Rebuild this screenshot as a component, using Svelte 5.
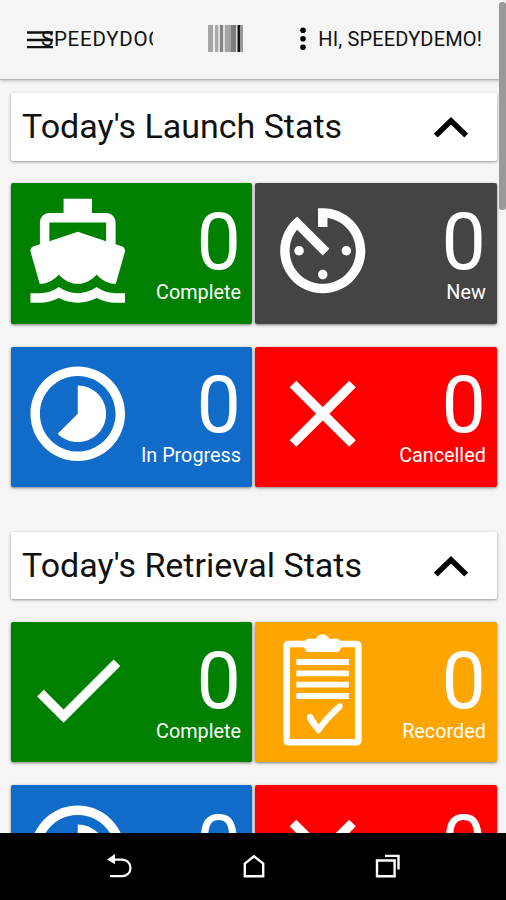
<script>
  const icons = {
    boat: 'M20 21c-1.39 0-2.78-.47-4-1.32-2.44 1.71-5.56 1.71-8 0C6.78 20.53 5.39 21 4 21H2v2h2c1.38 0 2.74-.35 4-.99 2.52 1.29 5.48 1.29 8 0 1.26.65 2.62.99 4 .99h2v-2h-2zM3.95 19H4c1.6 0 3.02-.88 4-2 .98 1.12 2.4 2 4 2s3.02-.88 4-2c.98 1.12 2.4 2 4 2h.05l1.89-6.68c.08-.26.06-.54-.06-.78s-.34-.42-.6-.5L20 10.62V6c0-1.1-.9-2-2-2h-3V1H9v3H6c-1.1 0-2 .9-2 2v4.62l-1.29.42c-.26.08-.48.26-.6.5s-.15.52-.06.78L3.95 19zM6 6h12v3.97L12 8 6 9.97V6z',
    timer: 'M11 17c0 .55.45 1 1 1s1-.45 1-1-.45-1-1-1-1 .45-1 1zm0-14v4h2V5.08c3.39.49 6 3.39 6 6.92 0 3.87-3.13 7-7 7s-7-3.13-7-7c0-1.68.59-3.22 1.58-4.42L12 13l1.41-1.41-6.8-6.8v.02C4.42 6.45 3 9.05 3 12c0 4.97 4.02 9 9 9 4.97 0 9-4.03 9-9s-4.03-9-9-9h-1zm7 9c0-.55-.45-1-1-1s-1 .45-1 1 .45 1 1 1 1-.45 1-1zM6 12c0 .55.45 1 1 1s1-.45 1-1-.45-1-1-1-1 .45-1 1z',
    timelapse: 'M16.24 7.76C15.07 6.59 13.54 6 12 6v6l-4.24 4.24c2.34 2.34 6.14 2.34 8.49 0 2.34-2.34 2.34-6.14-.01-8.48zM12 2C6.48 2 2 6.48 2 12s4.48 10 10 10 10-4.48 10-10S17.52 2 12 2zm0 18c-4.42 0-8-3.58-8-8s3.58-8 8-8 8 3.58 8 8-3.58 8-8 8z',
    close: 'M19 6.41L17.59 5 12 10.59 6.41 5 5 6.41 10.59 12 5 17.59 6.41 19 12 13.41 17.59 19 19 17.59 13.41 12z',
    check: 'M9 16.17L4.83 12l-1.42 1.41L9 19 21 7l-1.41-1.41z'
  };

  const sections = [
    {
      title: "Today's Launch Stats",
      kind: 'launch',
      tiles: [
        { label: 'Complete', count: 0, color: 'green', icon: 'boat' },
        { label: 'New', count: 0, color: 'dark', icon: 'timer' },
        { label: 'In Progress', count: 0, color: 'blue', icon: 'timelapse' },
        { label: 'Cancelled', count: 0, color: 'red', icon: 'close' }
      ]
    },
    {
      title: "Today's Retrieval Stats",
      kind: 'retrieval',
      tiles: [
        { label: 'Complete', count: 0, color: 'green', icon: 'check' },
        { label: 'Recorded', count: 0, color: 'orange', icon: 'clipboard' },
        { label: 'In Progress', count: 0, color: 'blue', icon: 'timelapse' },
        { label: 'Cancelled', count: 0, color: 'red', icon: 'close' }
      ]
    }
  ];

  let open = $state({ launch: true, retrieval: true });
</script>

<div class="screen">
  <header>
    <svg class="menu" viewBox="0 0 26 18">
      <path d="M0 1.5h26M0 9h26M0 16.2h26" stroke="#111" stroke-width="2.3" />
    </svg>
    <span class="brand">SPEEDYDOCK</span>
    <svg class="barcode" viewBox="0 0 35 27">
      <rect width="5" height="27" fill="#a5a5a5" />
      <rect x="5" width="2" height="27" fill="#eee" />
      <rect x="7" width="3" height="27" fill="#aaa" />
      <rect x="10" width="2" height="27" fill="#ddd" />
      <rect x="12" width="3" height="27" fill="#858585" />
      <rect x="15" width="2" height="27" fill="#ddd" />
      <rect x="17" width="6" height="27" fill="#a5a5a5" />
      <rect x="23" width="5" height="27" fill="#7d7d7d" />
      <rect x="28" width="1.5" height="27" fill="#ddd" />
      <rect x="29.5" width="2.5" height="27" fill="#111" />
      <rect x="32" width="3" height="27" fill="#999" />
    </svg>
    <svg class="dots" viewBox="0 0 6 24">
      <circle cx="3" cy="3.2" r="2.8" />
      <circle cx="3" cy="11.7" r="2.8" />
      <circle cx="3" cy="20.2" r="2.8" />
    </svg>
    <span class="user">HI, SPEEDYDEMO!</span>
  </header>

  <main>
    {#each sections as section}
      <section>
        <button class="title" onclick={() => (open[section.kind] = !open[section.kind])}>
          <span>{section.title}</span>
          <svg class:closed={!open[section.kind]} viewBox="0 0 34 21">
            <path d="M1.8 18.6L17 3.8l15.2 14.8" fill="none" stroke="#000" stroke-width="5.4" />
          </svg>
        </button>
        {#if open[section.kind]}
          <div class="tiles">
            {#each section.tiles as tile}
              <div class="tile {tile.color}">
                {#if tile.icon === 'clipboard'}
                  <svg class="icon" viewBox="0 0 113.5 113.5">
                    <rect x="20.7" y="11" width="71.6" height="98.3" rx="1.5" fill="none" stroke="#fff" stroke-width="6.6" />
                    <circle cx="56.6" cy="8.2" r="7" />
                    <path d="M43 5.8h27.4q4 0 4 3.3c3 .6 3 5.8 0 6.4q0 3.6-4 3.6H43q-4 0-4-3.6c-3-.6-3-5.8 0-6.4q0-3.3 4-3.3z" />
                    <path d="M30.3 29h52.6M30.3 40.3h52.6M30.3 51.7h52.6M30.3 63h52.6" stroke="#fff" stroke-width="5.8" />
                    <path d="M41 83c2-3 5-3 6.6 1l5 7.5C59 83 65 76.5 72 71c3-2 6 1 4 4.5C68 83 60 91 54.5 99.3q-2 2.5-4 0C46.5 94 43 90 41 86z" />
                  </svg>
                {:else}
                  <svg class="icon" viewBox="0 0 24 24"><path d={icons[tile.icon]} /></svg>
                {/if}
                <div class="figures">
                  <div class="count">{tile.count}</div>
                  <div class="label">{tile.label}</div>
                </div>
              </div>
            {/each}
          </div>
        {/if}
      </section>
    {/each}
  </main>

  <nav>
    <svg viewBox="0 0 26 26">
      <path d="M3 22.2h12.2a8.3 8.3 0 0 0 0-16.6H6" fill="none" stroke="#fff" stroke-width="2.2" />
      <path d="M0 5.4L8 0v10.3z" fill="#fff" />
    </svg>
    <svg viewBox="0 0 26 26">
      <path d="M3.8 22.2V9.5L13 2.3l9.2 7.2v12.7z" fill="none" stroke="#fff" stroke-width="2.4" />
    </svg>
    <svg viewBox="0 0 26 26">
      <path d="M2 6.5h17.6v15.7H2zM10 1.9h13.5v13.6" fill="none" stroke="#fff" stroke-width="2.4" />
    </svg>
  </nav>

  <div class="scrollbar"></div>
</div>

<style>
  :global(body) {
    background: #f5f5f5;
  }

  .screen {
    position: relative;
    display: flex;
    flex-direction: column;
    height: 900px;
    overflow: hidden;
    background: #f5f5f5;
    color: #111;
    font-family: Roboto, sans-serif;
  }

  header {
    display: flex;
    align-items: center;
    flex: none;
    box-sizing: border-box;
    height: 80px;
    padding: 0 24px 2px 27px;
    border-bottom: 1px solid #b4b4b4;
    box-shadow: 0 1px 3px rgba(0, 0, 0, 0.22);
    font-size: 20px;
    white-space: nowrap;
  }

  header svg {
    flex: none;
  }

  .menu {
    width: 26px;
    height: 18px;
    margin-top: 2px;
  }

  .brand {
    width: 112px;
    margin: 1px 0 0 -12px;
    overflow: hidden;
    font-size: 20.5px;
    letter-spacing: 0.75px;
  }

  .barcode {
    width: 35px;
    height: 27px;
    margin-left: 55px;
  }

  .dots {
    width: 6px;
    height: 24px;
    margin-left: 57px;
  }

  .user {
    margin-left: auto;
    letter-spacing: 0.15px;
  }

  main {
    flex: 1;
    min-height: 0;
    padding: 13.3px 9.4px 0 10.5px;
    overflow: hidden;
  }

  section {
    margin-bottom: 45.3px;
  }

  .title {
    display: flex;
    align-items: center;
    justify-content: space-between;
    box-sizing: border-box;
    width: 100%;
    height: 67.3px;
    margin-bottom: 22.7px;
    padding: 0 29px 1px 11.5px;
    border: 0;
    border-radius: 2px;
    background: #fff;
    box-shadow: 0 1px 3px rgba(0, 0, 0, 0.4);
    color: #111;
    font: 34px Roboto, sans-serif;
  }

  .title svg {
    width: 34px;
    height: 21px;
    margin-top: 3px;
  }

  .closed {
    transform: rotate(180deg);
  }

  .tiles {
    display: grid;
    grid-template-columns: 1fr 1fr;
    gap: 23px 3.6px;
  }

  .tile {
    display: flex;
    justify-content: space-between;
    box-sizing: border-box;
    height: 140.3px;
    padding: 10.5px 10.8px 0 10.4px;
    border-radius: 2px;
    box-shadow: 0 1px 3px rgba(0, 0, 0, 0.5);
    color: #fff;
  }

  .green {
    background: #008000;
  }

  .dark {
    background: #444;
  }

  .blue {
    background: #116bc9;
  }

  .red {
    background: #f00;
  }

  .orange {
    background: #ffa500;
  }

  .icon {
    flex: none;
    width: 113.5px;
    height: 113.5px;
    fill: #fff;
  }

  .figures {
    display: flex;
    flex-direction: column;
    align-items: flex-end;
    padding-top: 10px;
    white-space: nowrap;
  }

  .count {
    height: 77px;
    font-size: 79px;
    line-height: 76px;
  }

  .label {
    font-size: 19.8px;
    line-height: 24px;
  }

  nav {
    display: flex;
    justify-content: space-between;
    flex: none;
    box-sizing: border-box;
    height: 67px;
    padding: 21px 105px 0 107px;
    background: #000;
  }

  nav svg {
    width: 26px;
    height: 26px;
  }

  nav svg:nth-child(2) {
    margin-right: 1px;
  }

  .scrollbar {
    position: absolute;
    top: 2px;
    right: 0;
    width: 7px;
    height: 208px;
    border-radius: 3px;
    background: #999;
  }
</style>
